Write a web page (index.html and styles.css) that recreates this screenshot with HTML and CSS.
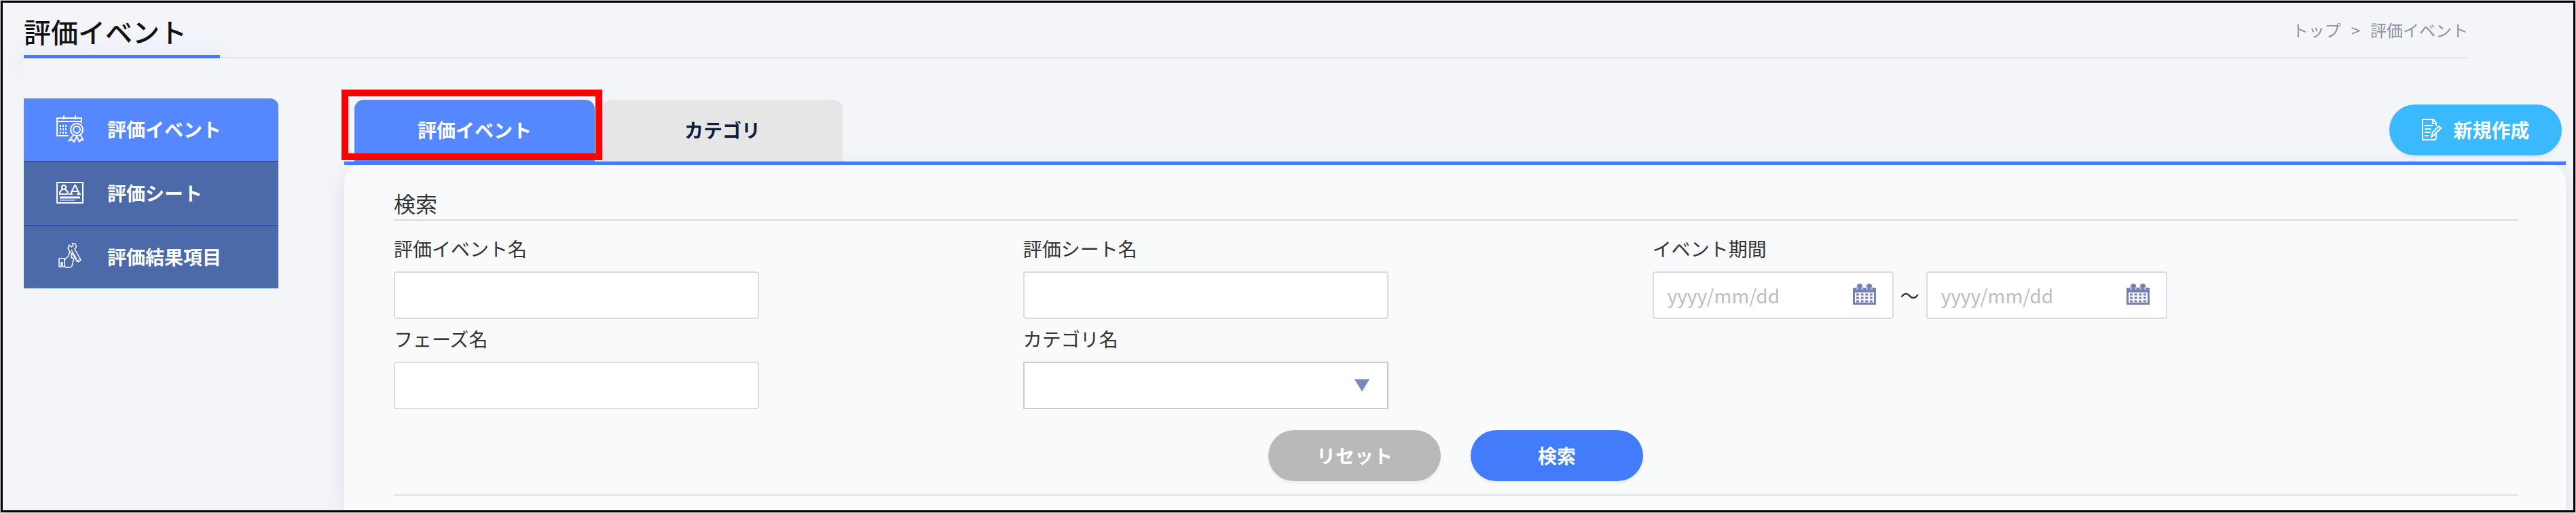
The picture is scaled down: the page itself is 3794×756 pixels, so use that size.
FILE: index.html
```html
<!DOCTYPE html>
<html lang="ja">
<head>
    <meta charset="UTF-8">
    <meta name="viewport" content="width=device-width, initial-scale=1.0">
    <title>評価イベント</title>
    <link rel="stylesheet" href="styles.css">
</head>
<body>
    <div class="page">
        <header class="page-header">
            <h1>評価イベント</h1>
            <nav class="breadcrumb">
                <a href="#">トップ</a>
                <span>&gt;</span>
                <span>評価イベント</span>
            </nav>
        </header>

        <div class="content">
            <nav class="sidebar">
                <a href="#" class="active">
                    <svg viewBox="0 0 40 40" width="40" height="40" fill="none" stroke="#fff" stroke-width="2">
                        <path d="M18 30H1V4h36v8M1 9h36M11 0v6M28 0v6"/>
                        <path d="M6 14v13M10 14v13M14 14v13" stroke-dasharray="3 2"/>
                        <circle cx="30" cy="21" r="9"/>
                        <circle cx="30" cy="21" r="5"/>
                        <path d="M25 29l-6 8 5-1 2 4 4-9 4 8 2-3 4 1-5-9"/>
                    </svg>
                    評価イベント
                </a>
                <a href="#">
                    <svg viewBox="0 0 40 40" width="40" height="40" fill="none" stroke="#fff" stroke-width="2">
                        <path d="M1 5h38v30H1z"/>
                        <circle cx="11" cy="12" r="3"/>
                        <path d="M9 15l-4 4v3h12v-3l-4-4"/>
                        <path d="M19 22h5M30 22h6M21 22l6-13h1l6 13M23 18h9"/>
                        <path d="M5 27h30" stroke-width="3"/>
                        <path d="M5 31h22" stroke-width="1"/>
                    </svg>
                    評価シート
                </a>
                <a href="#">
                    <svg viewBox="0 0 40 40" width="40" height="40" fill="none" stroke="#fff" stroke-width="1.5">
                        <path d="M4 23h8v12H4zM12 25l6-6 1-5c3 0 4 2 3 5v3h2q2 1 1 4l-2 8q-1 2-3 2h-6l-2-2"/>
                        <path d="M20 13l-3-5 2-5 3 3 3-2-2-4q7 0 6 7l-2 2 9 16-3 3-3-1-7-12"/>
                        <path d="M22 10l8 14M34 24l-4 3"/>
                        <path d="M8 28v6" stroke-width="3"/>
                    </svg>
                    評価結果項目
                </a>
            </nav>

            <main class="main">
                <div class="tab-bar">
                    <button type="button" class="tab active">評価イベント</button>
                    <button type="button" class="tab">カテゴリ</button>
                    <button type="button" class="btn btn-new">
                        <svg viewBox="0 0 30 32" width="30" height="32" fill="none" stroke="#fff" stroke-width="2">
                            <path d="M22 20v8q0 3-3 3H2V1h16l4 5v5M17 1v6h5"/>
                            <path d="M5 10h12M5 15h10M5 20h9M5 25h6"/>
                            <path d="M15 27l2-7 9-9 3 3-9 9-5 4z"/>
                        </svg>
                        新規作成
                    </button>
                </div>

                <section class="panel">
                    <h2>検索</h2>
                    <form class="search-form">
                        <div class="fields">
                            <div class="field">
                                <label for="eventName">評価イベント名</label>
                                <input type="text" id="eventName">
                            </div>
                            <div class="field">
                                <label for="sheetName">評価シート名</label>
                                <input type="text" id="sheetName">
                            </div>
                            <div class="field">
                                <label for="dateFrom">イベント期間</label>
                                <div class="date-range">
                                    <div class="date-box">
                                        <input type="text" id="dateFrom" placeholder="yyyy/mm/dd">
                                        <svg viewBox="0 0 34 32" width="34" height="32" fill="#7480b4">
                                            <path d="M0 6h34v25H0zM3 13v15h28V13z" fill-rule="evenodd"/>
                                            <circle cx="10" cy="4" r="4"/>
                                            <circle cx="24" cy="4" r="4"/>
                                            <path d="M5 5h10v4H5zM19 5h10v4H19z" fill="#a9b2d6"/>
                                            <path d="M8 4h4v5H8zM22 4h4v5h-4z"/>
                                            <path d="M5 16h24M5 21h24M5 26h24" stroke="#7480b4" stroke-width="3" stroke-dasharray="4 2.600"/>
                                        </svg>
                                    </div>
                                    <span>～</span>
                                    <div class="date-box">
                                        <input type="text" id="dateTo" aria-label="イベント期間 終了" placeholder="yyyy/mm/dd">
                                        <svg viewBox="0 0 34 32" width="34" height="32" fill="#7480b4">
                                            <path d="M0 6h34v25H0zM3 13v15h28V13z" fill-rule="evenodd"/>
                                            <circle cx="10" cy="4" r="4"/>
                                            <circle cx="24" cy="4" r="4"/>
                                            <path d="M5 5h10v4H5zM19 5h10v4H19z" fill="#a9b2d6"/>
                                            <path d="M8 4h4v5H8zM22 4h4v5h-4z"/>
                                            <path d="M5 16h24M5 21h24M5 26h24" stroke="#7480b4" stroke-width="3" stroke-dasharray="4 2.600"/>
                                        </svg>
                                    </div>
                                </div>
                            </div>
                            <div class="field">
                                <label for="phaseName">フェーズ名</label>
                                <input type="text" id="phaseName">
                            </div>
                            <div class="field">
                                <label for="category">カテゴリ名</label>
                                <div class="select-box">
                                    <select id="category">
                                        <option></option>
                                    </select>
                                </div>
                            </div>
                        </div>
                        <div class="actions">
                            <button type="reset" class="btn btn-reset">リセット</button>
                            <button type="submit" class="btn btn-search">検索</button>
                        </div>
                    </form>
                </section>
            </main>
        </div>
    </div>
</body>
</html>
```
FILE: styles.css
```css
* {
    box-sizing: border-box;
}
body {
    margin: 0;
    padding: 1px;
    background-color: #c9cfc9;
    font-family: "Noto Sans CJK JP", sans-serif;
    font-size: 28px;
    line-height: 40px;
    color: #333;
}
h1, h2 {
    margin: 0;
    font-weight: normal;
}
a {
    color: inherit;
    text-decoration: none;
}
svg {
    flex: none;
}
button, input, select {
    font: inherit;
}
.page {
    display: flex;
    flex-direction: column;
    min-height: calc(100vh - 2px);
    border: 3px solid #000;
    background-color: #f4f5f9;
    overflow: hidden;
}

/* header */
.page-header {
    display: flex;
    justify-content: space-between;
    height: 82px;
    margin: 0 155px 0 31px;
    border-bottom: 2px solid #dfe4ee;
}
h1 {
    position: relative;
    width: 289px;
    padding-top: 14px;
    font-size: 40px;
    font-weight: 500;
    line-height: 56px;
    color: #111;
}
h1::after {
    content: "";
    position: absolute;
    left: 0;
    bottom: -2px;
    width: 100%;
    height: 5px;
    background-color: #447afc;
    box-shadow: 0 10px 40px 4px rgba(68, 122, 252, 0.2);
}
.breadcrumb {
    display: flex;
    gap: 15px;
    padding-top: 20px;
    font-size: 24px;
    color: #8f93a5;
}

/* layout */
.content {
    position: relative;
    flex: 1;
    display: flex;
    gap: 97px;
    margin-left: 31px;
    padding: 59px 11px 0 0;
    background-color: #f4f5f9;
}
.sidebar {
    flex: none;
    align-self: flex-start;
    width: 375px;
    border-radius: 0 12px 0 0;
    overflow: hidden;
}
.sidebar a {
    display: flex;
    align-items: center;
    gap: 35px;
    height: 94px;
    padding: 0 0 2px 48px;
    background-color: #4c69aa;
    border-top: 2px solid #36508a;
    border-bottom: 1px solid #5580d8;
    color: #fff;
    font-weight: bold;
}
.sidebar a.active {
    height: 92px;
    border: none;
    background-color: #5588ff;
}
.main {
    flex: 1;
    display: flex;
    flex-direction: column;
}

/* tabs */
.tab-bar {
    position: relative;
    display: flex;
    align-items: flex-end;
    gap: 11px;
    height: 98px;
    padding: 0 6px 0 15px;
    border-bottom: 5px solid #447afc;
}
.tab {
    position: relative;
    width: 354px;
    height: 91px;
    padding: 0 0 4px;
    border: none;
    border-radius: 14px 14px 0 0;
    background-color: #e6e6e6;
    color: #0e1c40;
    font-weight: bold;
}
.tab.active {
    background-color: #5588ff;
    color: #fff;
}
.tab.active::after {
    content: "";
    position: absolute;
    inset: -15px -11px 2px -19px;
    border: 10px solid #f00;
}
.btn {
    display: flex;
    align-items: center;
    justify-content: center;
    gap: 17px;
    width: 254px;
    height: 75px;
    padding: 0 0 2px;
    border: none;
    border-radius: 38px;
    color: #fff;
    font-weight: bold;
    box-shadow: 0 3px 4px rgba(0, 0, 0, 0.06);
}
.btn-new {
    margin: 0 0 9px auto;
    background-color: #3bb9ff;
}

/* search panel */
.panel {
    flex: 1;
    padding: 36px 71px 17px 73px;
    border-radius: 24px 24px 0 0;
    background-color: #f9fafc;
    box-shadow: 0 8px 30px rgba(60, 70, 120, 0.12);
}
h2 {
    padding-bottom: 4px;
    border-bottom: 3px solid #dfe1e9;
    font-size: 32px;
}
.fields {
    display: grid;
    grid-template-columns: 8fr 8fr 11fr;
    row-gap: 9px;
    padding-top: 20px;
}
.field {
    display: flex;
    flex-direction: column;
    gap: 14px;
}
.field input, .field select {
    width: 538px;
    height: 70px;
    padding: 0 22px;
    border: 2px solid #dcdcdc;
    border-radius: 4px;
    background-color: #fff;
}
.field input::placeholder {
    color: #bdbdbd;
}
.select-box {
    position: relative;
    width: 538px;
    height: 70px;
}
.field select {
    appearance: none;
    border-color: #ccc;
    border-radius: 0;
}
.select-box::after {
    content: "";
    position: absolute;
    top: 26px;
    right: 28px;
    border: 11px solid transparent;
    border-top: 18px solid #7b87b5;
    border-bottom: none;
    pointer-events: none;
}
.date-range {
    display: flex;
    align-items: center;
}
.date-range span {
    width: 48px;
    text-align: center;
}
.date-box {
    position: relative;
}
.date-box input {
    display: block;
    width: 355px;
    padding: 0 20px;
}
.date-box svg {
    position: absolute;
    top: 18px;
    right: 26px;
}
.actions {
    display: flex;
    justify-content: center;
    gap: 44px;
    padding: 31px 0 19px;
    border-bottom: 3px solid #e4e6ec;
}
.btn-reset {
    background-color: #b9b9b9;
}
.btn-search {
    background-color: #427cfb;
}
```
